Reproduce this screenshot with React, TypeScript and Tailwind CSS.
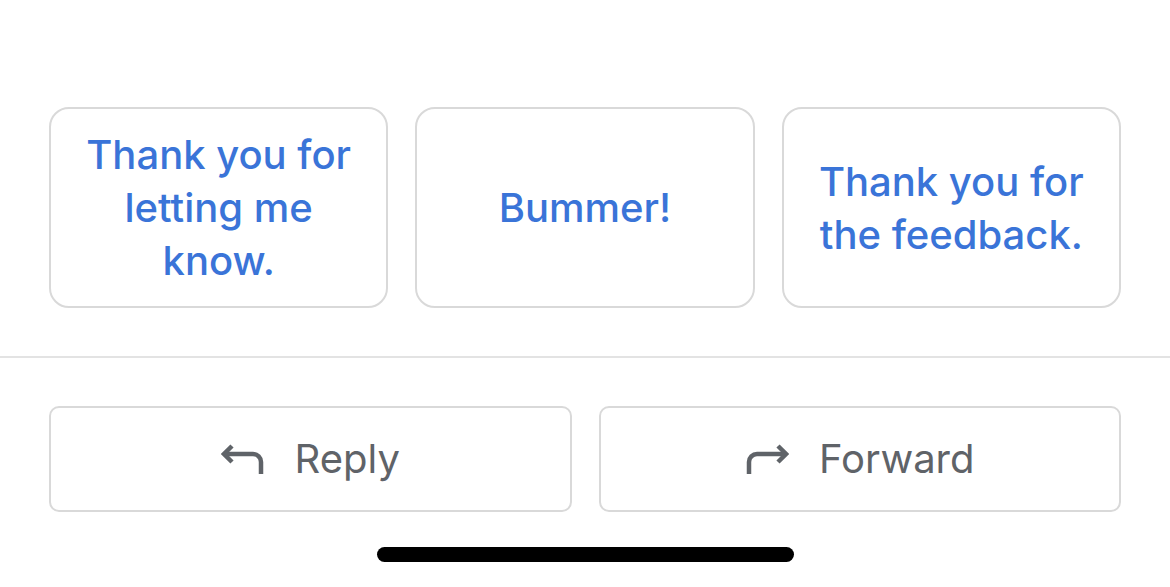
import React from "react";

function ReplyIcon() {
  return (
    <svg width="44" height="34" viewBox="0 0 44 34" fill="none" stroke="#5f6368" strokeWidth="4.5" strokeLinecap="butt" strokeLinejoin="miter">
      <path d="M11 4 L3 12 L11 20" />
      <path d="M3 12 H32 A8 8 0 0 1 40 20 V32" />
    </svg>
  );
}

function ForwardIcon() {
  return (
    <svg width="44" height="34" viewBox="0 0 44 34" fill="none" stroke="#5f6368" strokeWidth="4.5" strokeLinecap="butt" strokeLinejoin="miter">
      <path d="M33 4 L41 12 L33 20" />
      <path d="M41 12 H12 A8 8 0 0 0 4 20 V32" />
    </svg>
  );
}

export default function App() {
  const chips = [
    "Thank you for letting me know.",
    "Bummer!",
    "Thank you for the feedback.",
  ];
  return (
    <div
      className="w-[1170px] h-[587px] bg-white overflow-hidden flex flex-col"
      style={{ fontFamily: "Inter, 'Open Sans', sans-serif" }}
    >
      <div className="flex gap-[27px] px-[49px] pt-[107px]">
        {chips.map((c) => (
          <div
            key={c}
            className="w-[340px] h-[201px] border-2 border-[#d9d9d9] rounded-[20px] flex items-center justify-center px-[24px] text-center text-[40px] font-medium leading-[53px] text-[#3a74d8]"
          >
            {c}
          </div>
        ))}
      </div>
      <div className="mt-[48px] h-[2px] bg-[#e3e3e3]" />
      <div className="flex gap-[27px] px-[49px] mt-[48px]">
        <div className="flex-1 h-[106px] border-2 border-[#d9d9d9] rounded-[10px] flex items-center justify-center gap-[30px] text-[#5f6368] text-[40px]">
          <ReplyIcon />
          <span>Reply</span>
        </div>
        <div className="flex-1 h-[106px] border-2 border-[#d9d9d9] rounded-[10px] flex items-center justify-center gap-[30px] text-[#5f6368] text-[40px]">
          <ForwardIcon />
          <span>Forward</span>
        </div>
      </div>
      <div className="flex justify-center mt-[35px]">
        <div className="w-[417px] h-[15px] rounded-full bg-black" />
      </div>
    </div>
  );
}
